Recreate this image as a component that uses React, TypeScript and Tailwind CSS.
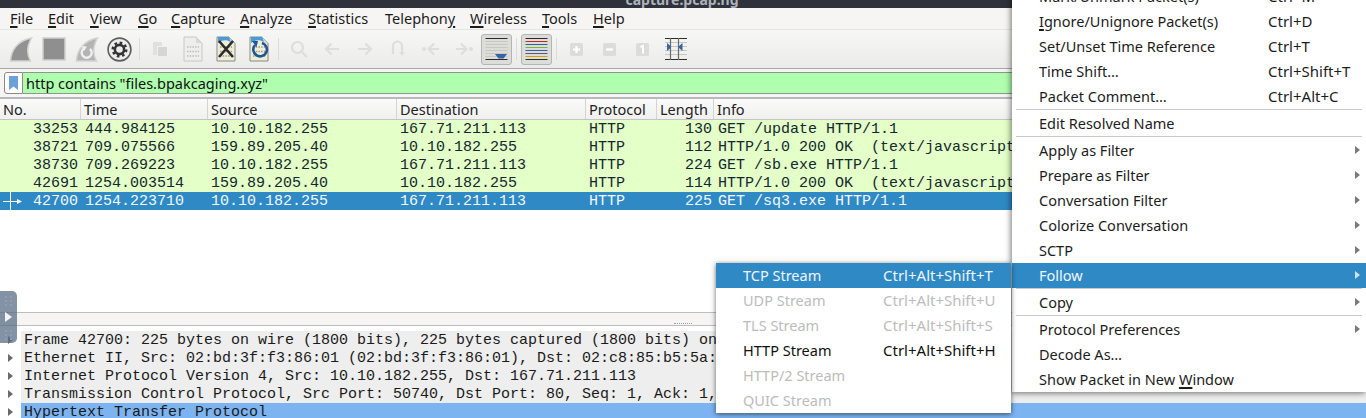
const uiFont = "font-['Noto_Sans',sans-serif]"

const menus = [
  { pre: '', key: 'F', post: 'ile', w: 'w-[38px]' },
  { pre: '', key: 'E', post: 'dit', w: 'w-[42px]' },
  { pre: '', key: 'V', post: 'iew', w: 'w-[48px]' },
  { pre: '', key: 'G', post: 'o', w: 'w-[33px]' },
  { pre: '', key: 'C', post: 'apture', w: 'w-[69px]' },
  { pre: '', key: 'A', post: 'nalyze', w: 'w-[68px]' },
  { pre: '', key: 'S', post: 'tatistics', w: 'w-[77px]' },
  { pre: 'Telephon', key: 'y', post: '', w: 'w-[85px]' },
  { pre: '', key: 'W', post: 'ireless', w: 'w-[72px]' },
  { pre: '', key: 'T', post: 'ools', w: 'w-[51px]' },
  { pre: '', key: 'H', post: 'elp', w: 'w-[40px]' }
]

const columns = [
  { name: 'No.', w: 'w-[81px]' },
  { name: 'Time', w: 'w-[127px]' },
  { name: 'Source', w: 'w-[189px]' },
  { name: 'Destination', w: 'w-[189px]' },
  { name: 'Protocol', w: 'w-[71px]' },
  { name: 'Length', w: 'w-[57px]' },
  { name: 'Info', w: 'flex-1' }
]

const packets = [
  ['33253', '444.984125', '10.10.182.255', '167.71.211.113', 'HTTP', '130', 'GET /update HTTP/1.1'],
  ['38721', '709.075566', '159.89.205.40', '10.10.182.255', 'HTTP', '112', 'HTTP/1.0 200 OK  (text/javascript)'],
  ['38730', '709.269223', '10.10.182.255', '167.71.211.113', 'HTTP', '224', 'GET /sb.exe HTTP/1.1'],
  ['42691', '1254.003514', '159.89.205.40', '10.10.182.255', 'HTTP', '114', 'HTTP/1.0 200 OK  (text/javascript)'],
  ['42700', '1254.223710', '10.10.182.255', '167.71.211.113', 'HTTP', '225', 'GET /sq3.exe HTTP/1.1']
]

const details = [
  'Frame 42700: 225 bytes on wire (1800 bits), 225 bytes captured (1800 bits) on interface',
  'Ethernet II, Src: 02:bd:3f:f3:86:01 (02:bd:3f:f3:86:01), Dst: 02:c8:85:b5:5a:aa (02:c8:85:b5:5a:aa)',
  'Internet Protocol Version 4, Src: 10.10.182.255, Dst: 167.71.211.113',
  'Transmission Control Protocol, Src Port: 50740, Dst Port: 80, Seq: 1, Ack: 1, Len: 171',
  'Hypertext Transfer Protocol'
]

const contextItems = [
  { label: 'Mark/Unmark Packet(s)', shortcut: 'Ctrl+M' },
  { label: 'Ignore/Unignore Packet(s)', shortcut: 'Ctrl+D', under: 'I' },
  { label: 'Set/Unset Time Reference', shortcut: 'Ctrl+T' },
  { label: 'Time Shift…', shortcut: 'Ctrl+Shift+T' },
  { label: 'Packet Comment…', shortcut: 'Ctrl+Alt+C' },
  { sep: true },
  { label: 'Edit Resolved Name' },
  { sep: true },
  { label: 'Apply as Filter', arrow: true },
  { label: 'Prepare as Filter', arrow: true },
  { label: 'Conversation Filter', arrow: true },
  { label: 'Colorize Conversation', arrow: true },
  { label: 'SCTP', arrow: true },
  { label: 'Follow', arrow: true, active: true },
  { sep: true },
  { label: 'Copy', arrow: true },
  { sep: true },
  { label: 'Protocol Preferences', arrow: true },
  { label: 'Decode As…' },
  { label: 'Show Packet in New Window', under: 'W' }
]

const followItems = [
  { label: 'TCP Stream', shortcut: 'Ctrl+Alt+Shift+T', state: 'active' },
  { label: 'UDP Stream', shortcut: 'Ctrl+Alt+Shift+U', state: 'off' },
  { label: 'TLS Stream', shortcut: 'Ctrl+Alt+Shift+S', state: 'off' },
  { label: 'HTTP Stream', shortcut: 'Ctrl+Alt+Shift+H', state: 'on' },
  { label: 'HTTP/2 Stream', shortcut: '', state: 'off' },
  { label: 'QUIC Stream', shortcut: '', state: 'off' }
]

const Fin = ({ fill }: { fill: string }) => (
  <path d="M1.5 24 C2 13 9 3.5 22.5 1 C18 9 17.5 17 21.5 24 Z" fill={fill} stroke="#d2d2d2" strokeWidth="1.5" />
)

const PageBase = ({ muted }: { muted?: boolean }) => (
  <>
    <path d="M3 1 H15 L21 7 V25 H3 Z" fill={muted ? '#eeeeec' : '#eeeed8'} stroke={muted ? '#c8c8c8' : '#8a8a80'} />
    <path d="M15 1 V7 H21 Z" fill={muted ? '#d8d8d8' : '#c8d8e8'} />
    <g stroke={muted ? '#bcbcbc' : '#9a9a8a'} strokeWidth="1.6" strokeDasharray="1.5 1.2">
      <path d="M6 11 H18" />
      <path d="M6 15.5 H18" />
      <path d="M6 20 H18" />
    </g>
  </>
)

const NavIcon = ({ d, dot }: { d: string; dot?: number }) => (
  <svg width="20" height="20" viewBox="0 0 20 20" fill="none" stroke="#dedede" strokeWidth="2.2">
    <path d={d} />
    {dot !== undefined && <circle cx={dot} cy="10" r="2" fill="#dedede" stroke="none" />}
  </svg>
)

const Square = ({ kind }: { kind: string }) => (
  <svg width="13" height="13" viewBox="0 0 13 13">
    <rect width="13" height="13" rx="1.5" fill="#dcdcdc" />
    {kind === 'plus' && <path d="M3 6.5 H10 M6.5 3 V10" stroke="#fff" strokeWidth="2.2" />}
    {kind === 'minus' && <path d="M3 6.5 H10" stroke="#fff" strokeWidth="2.2" />}
    {kind === 'one' && <path d="M4.5 4 L7 3 V10.5" stroke="#fff" strokeWidth="2" fill="none" />}
  </svg>
)

const tools = [
  <svg key="fin" width="24" height="25" viewBox="0 0 24 25"><Fin fill="#929292" /></svg>,
  <svg key="stop" width="24" height="24" viewBox="0 0 24 24"><rect x="1" y="1" width="22" height="22" fill="#8f8f8f" stroke="#d0d0d0" strokeWidth="1.5" /></svg>,
  <svg key="restart" width="24" height="25" viewBox="0 0 24 25">
    <Fin fill="#b4b4b4" />
    <path d="M15 12 A5 5 0 1 1 9 11.5" fill="none" stroke="#f0f0f0" strokeWidth="2.4" />
    <path d="M6.5 9 L12 9.5 L9 14 Z" fill="#f0f0f0" />
  </svg>,
  <svg key="gear" width="25" height="25" viewBox="0 0 25 25">
    <circle cx="12.5" cy="12.5" r="11.4" fill="#ededed" stroke="#5e5e5e" strokeWidth="1.6" />
    <circle cx="12.5" cy="12.5" r="6.8" fill="none" stroke="#333" strokeWidth="2.4" strokeDasharray="2.6 2.74" />
    <circle cx="12.5" cy="12.5" r="4.6" fill="none" stroke="#333" strokeWidth="2.6" />
  </svg>
]

const fileTools = [
  <svg key="open" width="16" height="16" viewBox="0 0 16 16">
    <path d="M1 1 H10 V5 H5 V14 H1 Z" fill="#e0e0e0" />
    <rect x="6" y="6" width="9" height="9" fill="#d6d6d6" />
  </svg>,
  <svg key="file" width="24" height="26" viewBox="0 0 24 26"><PageBase muted /></svg>,
  <svg key="close" width="24" height="26" viewBox="0 0 24 26">
    <PageBase />
    <path d="M4 1 H15 L17 6 C12 3 8 4 4 7 Z" fill="#4a9ad4" />
    <path d="M5 5 L19 21 M19 5 L5 21" stroke="#2b2b2b" strokeWidth="2.6" />
  </svg>,
  <svg key="reload" width="24" height="26" viewBox="0 0 24 26">
    <PageBase />
    <path d="M4 1 H15 L17 6 C12 3 8 4 4 7 Z" fill="#4a9ad4" />
    <path d="M15 7 A6.8 6.8 0 1 1 8 9" fill="none" stroke="#20559a" strokeWidth="2.6" />
    <path d="M5 5 L11 5 L9.5 11 Z" fill="#20559a" />
  </svg>
]

const navTools = [
  <svg key="find" width="20" height="20" viewBox="0 0 20 20" fill="none" stroke="#dedede" strokeWidth="2.2">
    <circle cx="8.5" cy="8.5" r="5.5" />
    <path d="M12.5 12.5 L18 18" />
  </svg>,
  <NavIcon key="back" d="M17 10 H4 M9.5 4.5 L4 10 L9.5 15.5" />,
  <NavIcon key="forward" d="M3 10 H16 M10.5 4.5 L16 10 L10.5 15.5" />,
  <svg key="goto" width="20" height="20" viewBox="0 0 20 20" fill="none" stroke="#dedede" strokeWidth="2.2">
    <path d="M5 15 V7 A4.5 4.5 0 0 1 14 7 V13" />
    <path d="M11 13 H17 L14 17 Z" fill="#dedede" stroke="none" />
  </svg>,
  <NavIcon key="first" d="M18 10 H8 M13 4.5 L7.5 10 L13 15.5" dot={3} />,
  <NavIcon key="last" d="M2 10 H12 M7 4.5 L12.5 10 L7 15.5" dot={17} />
]

const LinesToggle = ({ colors, arrow }: { colors: string[]; arrow?: boolean }) => (
  <div className="w-[33px] h-[32px] flex items-end justify-center">
    <div className="w-[31px] h-[31px] bg-[#dcdcd9] border border-[#b4b4b4] rounded-[3px] flex items-center justify-center">
      <svg width="23" height="23" viewBox="0 0 23 23">
        {colors.map((c, i) => (
          <rect key={i} x="0.5" y={i * 3} width="22" height="1" fill={c} />
        ))}
        {arrow && <path d="M10 16 H22 L18.5 20.5 H13.5 Z" fill="#3465a4" />}
      </svg>
    </div>
  </div>
)

const Tool = ({ children }: { children: React.ReactNode }) => (
  <div className="w-[33px] flex items-center justify-center">{children}</div>
)

const ToolSep = () => (
  <div className="w-[7px] flex justify-center">
    <div className="w-px h-[22px] bg-[#dcdcdc]" />
  </div>
)

const Underlined = ({ text, ch }: { text: string; ch?: string }) => {
  if (!ch) return <>{text}</>
  const i = text.indexOf(ch)
  return (
    <>
      {text.slice(0, i)}
      <span className="underline decoration-[1.5px] underline-offset-2">{ch}</span>
      {text.slice(i + 1)}
    </>
  )
}

const PacketList = () => (
  <div className="font-['Liberation_Mono',monospace] text-[15px] leading-[20px]">
    {packets.map((p, i) => {
      const selected = i === packets.length - 1
      return (
        <div
          key={p[0]}
          className={`relative flex h-[18px] whitespace-pre ${selected ? 'bg-[#2e89c5] text-[#f4f8fb]' : 'bg-[#e4ffc7] text-[#12272f]'}`}
        >
          {selected && (
            <svg className="absolute left-[2px] top-0" width="20" height="18" viewBox="0 0 20 18" stroke="#fff" fill="none">
              <path d="M8.5 0 V18 M1 9.5 H15" />
              <path d="M15 7 L20 9.5 L15 12 Z" fill="#fff" stroke="none" />
            </svg>
          )}
          <div className="w-[81px] pr-[3px] text-right">{p[0]}</div>
          <div className="w-[127px] pl-[4px]">{p[1]}</div>
          <div className="w-[189px] pl-[3px]">{p[2]}</div>
          <div className="w-[189px] pl-[3px]">{p[3]}</div>
          <div className="w-[71px] pl-[3px]">{p[4]}</div>
          <div className="w-[57px] pr-[2px] text-right">{p[5]}</div>
          <div className="pl-[4px]">{p[6]}</div>
        </div>
      )
    })}
  </div>
)

const ContextMenu = () => (
  <div className={`absolute left-[1012px] top-[-16px] w-[354px] bg-white text-[14.5px] text-[#1c1c1c] shadow-[-1px_1px_6px_rgba(0,0,0,0.55)] ${uiFont}`}>
    {contextItems.map((item, i) =>
      item.sep ? (
        <div key={i} className="h-[2px] px-[4px]">
          <div className="h-px bg-[#c8c8c8]" />
        </div>
      ) : (
        <div
          key={i}
          className={`relative flex items-center h-[25px] pl-[27px] ${item.active ? 'bg-[#2e89c5] text-[#f2f7fb]' : ''}`}
        >
          <div className="w-[229px]">
            <Underlined text={item.label!} ch={item.under} />
          </div>
          <div className="text-[15px]">{item.shortcut}</div>
          {item.arrow && (
            <svg className="absolute right-[6px] top-[8px]" width="5" height="8" viewBox="0 0 5 8">
              <path d="M0 0 L5 4 L0 8 Z" fill={item.active ? '#cfe2f0' : '#7a7a7a'} />
            </svg>
          )}
        </div>
      )
    )}
  </div>
)

const FollowMenu = () => (
  <div className={`absolute left-[716px] top-[263px] w-[295px] bg-white text-[14.5px] shadow-[0_1px_5px_rgba(0,0,0,0.6)] ${uiFont}`}>
    {followItems.map((item) => (
      <div
        key={item.label}
        className={`flex items-center h-[25px] pl-[27px] ${
          item.state === 'active'
            ? 'bg-[#2e89c5] text-[#eef5fa]'
            : item.state === 'off'
              ? 'text-[#bcbcbc]'
              : 'text-[#101010]'
        }`}
      >
        <div className="w-[140px]">{item.label}</div>
        <div className="text-[15px]">{item.shortcut}</div>
      </div>
    ))}
  </div>
)

export default function App() {
  return (
    <div className="relative h-[418px] w-[1366px] overflow-hidden bg-white">
      <div className={`h-[8px] bg-[#2f323b] flex justify-center items-end overflow-hidden ${uiFont}`}>
        <span className="text-[14px] leading-[16px] font-bold text-[#aeb2bb] translate-x-[-1px]">capture.pcap.ng</span>
      </div>

      <div className={`flex h-[21px] items-center pl-[10px] bg-[#f6f5f4] text-[14.5px] text-[#1c1c1c] ${uiFont}`}>
        {menus.map((m) => (
          <div key={m.key} className={m.w}>
            {m.pre}
            <span className="underline decoration-[1.5px] underline-offset-2">{m.key}</span>
            {m.post}
          </div>
        ))}
      </div>

      <div className="flex h-[40px] items-center pl-[4px] border-t border-b border-t-[#e4e4e2] border-b-[#a8a8a6] bg-gradient-to-b from-[#f7f7f6] to-[#ebebea]">
        {tools.map((t) => <Tool key={t.key}>{t}</Tool>)}
        <ToolSep />
        {fileTools.map((t) => <Tool key={t.key}>{t}</Tool>)}
        <ToolSep />
        {navTools.map((t) => <Tool key={t.key}>{t}</Tool>)}
        <LinesToggle colors={['#2b2b2b', '#c8c8c0', '#c8c8c0', '#c8c8c0', '#c8c8c0', '#c8c8c0', '#c8c8c0', '#2b2b2b']} arrow />
        <ToolSep />
        <LinesToggle colors={['#2b2b2b', '#cc2222', '#2a60b0', '#7cb820', '#2a60b0', '#6a4a7a', '#d0a000', '#2b2b2b']} />
        <ToolSep />
        <Tool><Square kind="plus" /></Tool>
        <Tool><Square kind="minus" /></Tool>
        <Tool><Square kind="one" /></Tool>
        <Tool>
          <svg width="24" height="22" viewBox="0 0 24 22">
            {[0, 4, 8, 12, 16, 21].map((y, i) => (
              <rect key={y} x="1" y={y} width="22" height="1" fill={i === 0 || i === 5 ? '#2b2b2b' : '#c8c8c0'} />
            ))}
            <path d="M6.5 0 V22 M14.5 0 V22" stroke="#6a6a6a" strokeWidth="1.2" />
            <path d="M3 5 L6.5 8 V10 L3 13 Z M18.5 5 L15 8 V10 L18.5 13 Z" fill="#3465a4" />
          </svg>
        </Tool>
      </div>

      <div className={`flex h-[28px] pt-[3px] bg-[#f6f5f4] text-[14.5px] ${uiFont}`}>
        <div className="ml-[4px] w-[19px] h-[22px] bg-white border border-[#8a8a8a] rounded-l-[3px] flex items-center justify-center">
          <svg width="9" height="14" viewBox="0 0 9 14"><path d="M0 0 H9 V14 L4.5 10.5 L0 14 Z" fill="#6d9fd8" /></svg>
        </div>
        <div className="flex-1 h-[22px] bg-[#afffaf] border-y border-[#8a9a8a] pl-[3px] leading-[21px] text-[#101010]">
          http contains "files.bpakcaging.xyz"
        </div>
      </div>

      <div className={`flex h-[23px] border-t-2 border-[#b9b9b9] bg-gradient-to-b from-[#fafafa] to-[#f0f0ef] border-b border-b-[#c4c4c4] text-[14.5px] text-[#222] ${uiFont}`}>
        {columns.map((c) => (
          <div key={c.name} className={`${c.w} pl-[3px] border-r border-[#d4d4d4] leading-[20px]`}>{c.name}</div>
        ))}
      </div>

      <PacketList />

      <div className="h-[102px]" />

      <div className="flex h-[14px] items-end justify-center border-y border-[#bdbdbd] bg-[#f6f5f4]">
        <div className="w-[18px] border-t border-dotted border-[#a0a0a0] mb-[1px]" />
      </div>
      <div className="h-[5px]" />

      <div className="font-['Liberation_Mono',monospace] text-[15px] leading-[20px] text-[#1a1a1a]">
        {details.map((d, i) => (
          <div key={d} className="flex h-[18px] whitespace-pre">
            <div className="w-[21px] flex items-center justify-center">
              <svg width="5" height="8" viewBox="0 0 5 8"><path d="M0 0 L5 4 L0 8 Z" fill="#6a6a6a" /></svg>
            </div>
            <div className={`flex-1 pl-[3px] ${i === details.length - 1 ? 'bg-[#7cb3f1]' : 'bg-[#eeeeee]'}`}>{d}</div>
          </div>
        ))}
      </div>

      {/* slide-out handle lying over the pane edge */}
      <div className="absolute left-0 top-[291px] h-[52px] w-[17px] rounded-r-[5px] bg-[#5a6d86]/75 flex items-center justify-center">
        <svg width="13" height="46" viewBox="0 0 13 46">
          {[2, 6, 10, 36, 40, 44].map((y) => (
            <g key={y} fill="#8f9db0">
              <rect x="3" y={y} width="2" height="2" />
              <rect x="8" y={y} width="2" height="2" />
            </g>
          ))}
          <path d="M3 18 L10 23 L3 28 Z" fill="#f4f4f4" />
        </svg>
      </div>

      <ContextMenu />
      <FollowMenu />
    </div>
  )
}
